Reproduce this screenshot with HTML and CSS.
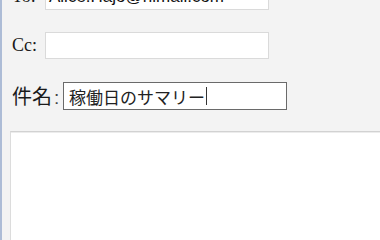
FILE: index.html
```html
<!DOCTYPE html>
<html lang="ja">
<head>
<meta charset="utf-8">
<title>メール作成</title>
<link rel="stylesheet" href="styles.css">
</head>
<body>
<div class="page">
  <form class="compose">
    <div class="row row-to">
      <span class="label label-latin">To:</span>
      <div class="field">Alice.Hajo@himail.com</div>
    </div>
    <div class="row row-cc">
      <span class="label label-latin">Cc:</span>
      <div class="field"></div>
    </div>
    <div class="row row-subject">
      <span class="label label-jp">件名<span class="colon">:</span></span>
      <div class="field field-active">稼働日のサマリー<span class="caret"></span></div>
    </div>
    <div class="body-area"></div>
  </form>
</div>
</body>
</html>
```

FILE: styles.css
```css
html, body {
  margin: 0;
  padding: 0;
  height: 100%;
  overflow: hidden;
}

body {
  background: #f3f3f3;
}

.page {
  height: 100%;
  border-left: 2px solid #adbcd6;
  box-sizing: border-box;
  overflow: hidden;
}

.compose {
  display: flex;
  flex-direction: column;
  margin-top: -17px;
  padding-left: 8px;
}

.row {
  display: flex;
  align-items: center;
}

.row-to {
  height: 27px;
}

.row-cc {
  height: 27px;
  margin-top: 22px;
}

.row-subject {
  height: 28px;
  margin-top: 23px;
}

.label {
  color: #1a1a1a;
  white-space: nowrap;
}

.label-latin {
  font-family: "Liberation Serif", "Times New Roman", serif;
  font-size: 18px;
  width: 35px;
  padding-left: 2px;
  box-sizing: border-box;
}

.label-jp {
  font-family: "Noto Sans CJK JP", "Noto Sans", sans-serif;
  font-size: 20px;
  width: 53px;
  padding-left: 2px;
  box-sizing: border-box;
  line-height: 1;
}

.colon {
  font-family: "Liberation Sans", Arial, sans-serif;
  font-size: 19px;
  margin-left: 2px;
  color: #444;
}

.field {
  width: 224px;
  height: 100%;
  box-sizing: border-box;
  background: #ffffff;
  border: 1px solid #dadada;
  font-family: "Liberation Sans", Arial, sans-serif;
  font-size: 17px;
  color: #111;
  padding-left: 3px;
  display: flex;
  align-items: center;
  white-space: nowrap;
  overflow: hidden;
}

.field-active {
  border: 1px solid #6a6a6a;
  font-family: "Noto Sans CJK JP", "Noto Sans", sans-serif;
  font-size: 17px;
  padding-left: 5px;
  color: #222;
}

.caret {
  display: inline-block;
  width: 1px;
  height: 18px;
  background: #333;
  margin-left: 1px;
}

.body-area {
  margin-top: 21px;
  width: 400px;
  height: 120px;
  background: #ffffff;
  border: 1px solid #dcdcdc;
  border-top-color: #d2d2d2;
  box-shadow: inset 0 1px 0 #ececec;
}
```
